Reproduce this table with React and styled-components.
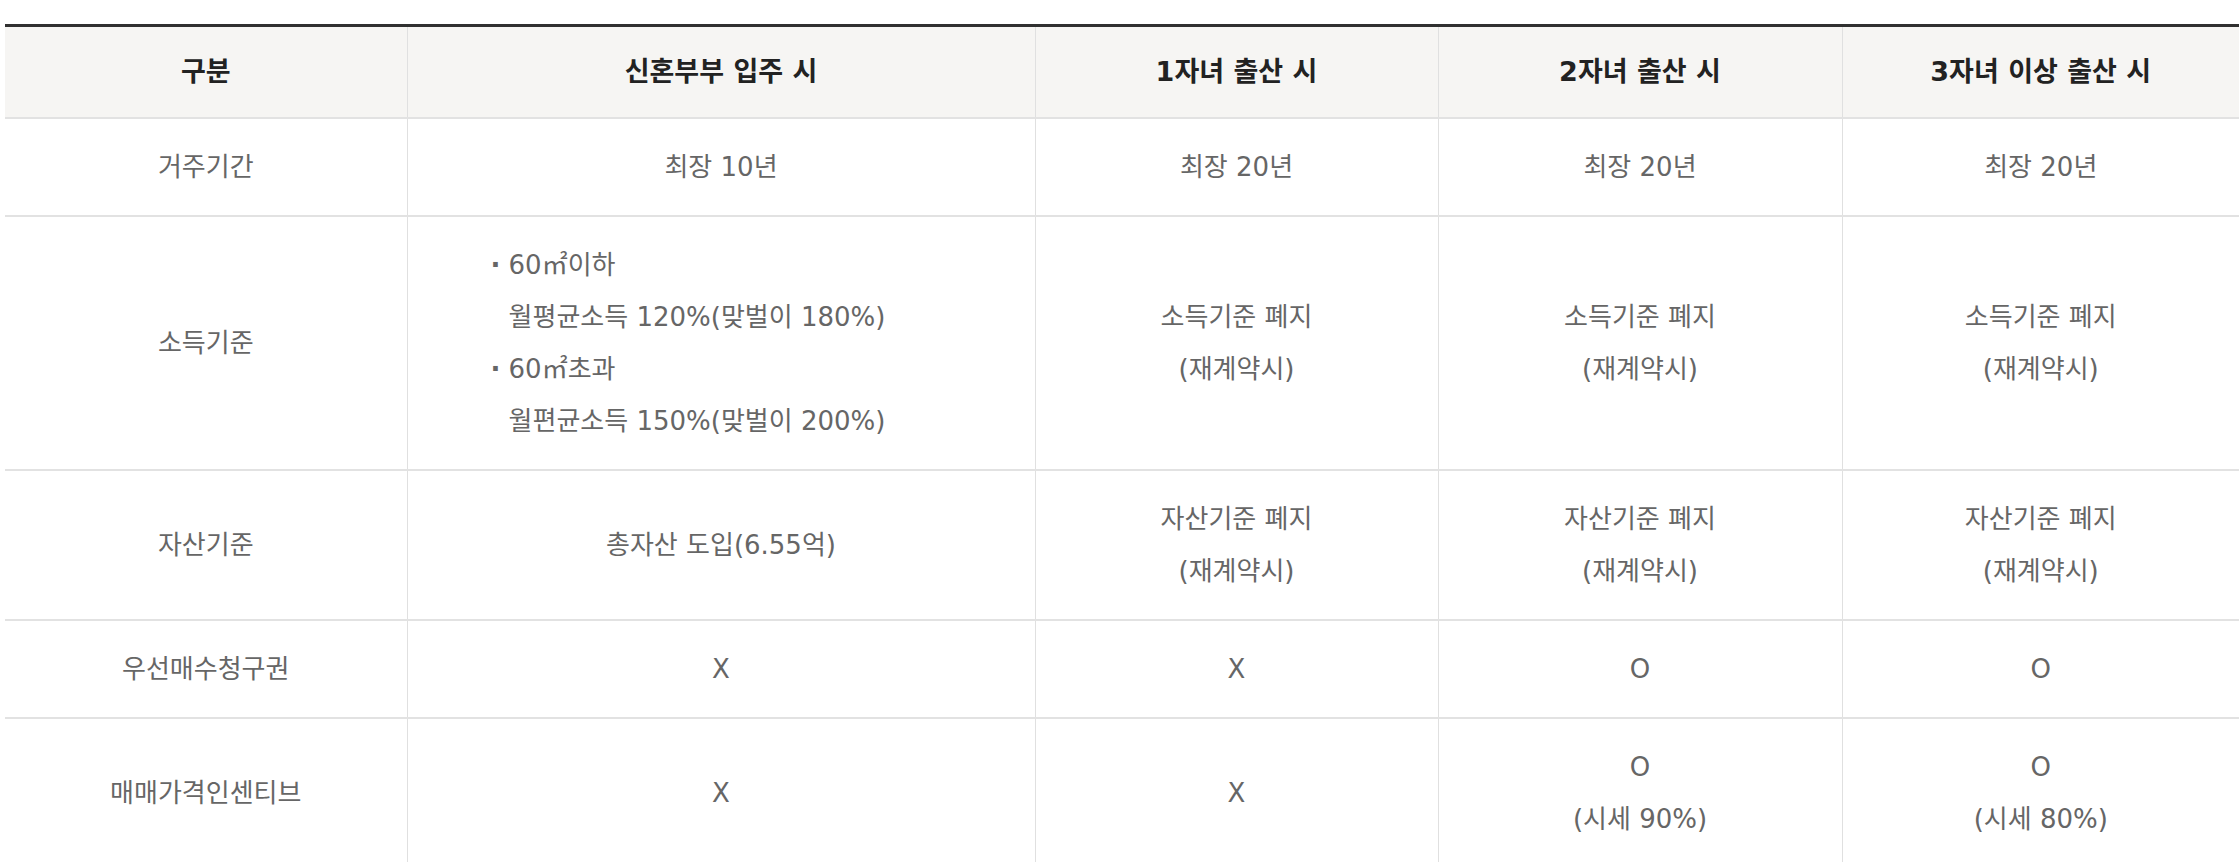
import React from 'react'
import styled, { createGlobalStyle } from 'styled-components'

const GlobalStyle = createGlobalStyle`
    html, body {
        margin: 0;
        padding: 0;
        background: #ffffff;
    }
    body {
        font-family: "DejaVu Sans", "Noto Sans CJK KR", sans-serif;
        overflow: hidden;
    }
`

const Page = styled.div`
    width: 2239px;
    height: 862px;
    overflow: hidden;
    padding: 24px 0 0 5px;
    box-sizing: border-box;
`

const Table = styled.table`
    width: 2234px;
    table-layout: fixed;
    border-collapse: collapse;
    border-top: 3px solid #303030;
    font-size: 26px;
`

const Col = styled.col`
    width: ${props => props.$w}px;
`

const Head = styled.th`
    background: #f6f5f3;
    color: #222222;
    font-size: 27px;
    font-weight: 700;
    line-height: 52px;
    padding: 19px 10px;
    text-align: center;
    border-bottom: 2px solid #e2e2e2;
    border-left: 1px solid #e0e0e0;

    &:first-child {
        border-left: none;
    }
`

const Cell = styled.td`
    color: #666666;
    font-weight: 400;
    line-height: 52px;
    padding: 22px 10px;
    text-align: center;
    vertical-align: middle;
    border-bottom: 2px solid #e2e2e2;
    border-left: 1px solid #e0e0e0;

    &:first-child {
        border-left: none;
    }
`

const List = styled.ul`
    display: inline-block;
    list-style: none;
    margin: 0;
    padding: 0 66px 0 0;
    text-align: left;
`

const Item = styled.li`
    position: relative;
    padding-left: 18px;

    &::before {
        content: ${props => props.$bullet ? '"·"' : 'none'};
        position: absolute;
        left: 0;
        top: 0;
        font-weight: 700;
    }
`

const Line = styled.span`
    display: block;
`

const rows = [
    { label: '거주기간', cells: [['최장 10년'], ['최장 20년'], ['최장 20년'], ['최장 20년']] },
    { label: '소득기준', cells: [null, ['소득기준 폐지', '(재계약시)'], ['소득기준 폐지', '(재계약시)'], ['소득기준 폐지', '(재계약시)']] },
    { label: '자산기준', cells: [['총자산 도입(6.55억)'], ['자산기준 폐지', '(재계약시)'], ['자산기준 폐지', '(재계약시)'], ['자산기준 폐지', '(재계약시)']] },
    { label: '우선매수청구권', cells: [['X'], ['X'], ['O'], ['O']] },
    { label: '매매가격인센티브', cells: [['X'], ['X'], ['O', '(시세 90%)'], ['O', '(시세 80%)']] },
]

function IncomeList() {
    return (
        <List>
            <Item $bullet>60㎡이하</Item>
            <Item>월평균소득 120%(맞벌이 180%)</Item>
            <Item $bullet>60㎡초과</Item>
            <Item>월편균소득 150%(맞벌이 200%)</Item>
        </List>
    )
}

function App() {
    return (
        <Page>
            <GlobalStyle />
            <Table>
                <colgroup>
                    <Col $w={402} />
                    <Col $w={628} />
                    <Col $w={403} />
                    <Col $w={404} />
                    <Col $w={397} />
                </colgroup>
                <thead>
                    <tr>
                        <Head>구분</Head>
                        <Head>신혼부부 입주 시</Head>
                        <Head>1자녀 출산 시</Head>
                        <Head>2자녀 출산 시</Head>
                        <Head>3자녀 이상 출산 시</Head>
                    </tr>
                </thead>
                <tbody>
                    { rows.map(row => (
                        <tr key={ row.label }>
                            <Cell>{ row.label }</Cell>
                            { row.cells.map((lines, i) => (
                                <Cell key={ i }>
                                    { lines
                                        ? lines.map(text => <Line key={ text }>{ text }</Line>)
                                        : <IncomeList /> }
                                </Cell>
                            )) }
                        </tr>
                    )) }
                </tbody>
            </Table>
        </Page>
    )
}

export default App
